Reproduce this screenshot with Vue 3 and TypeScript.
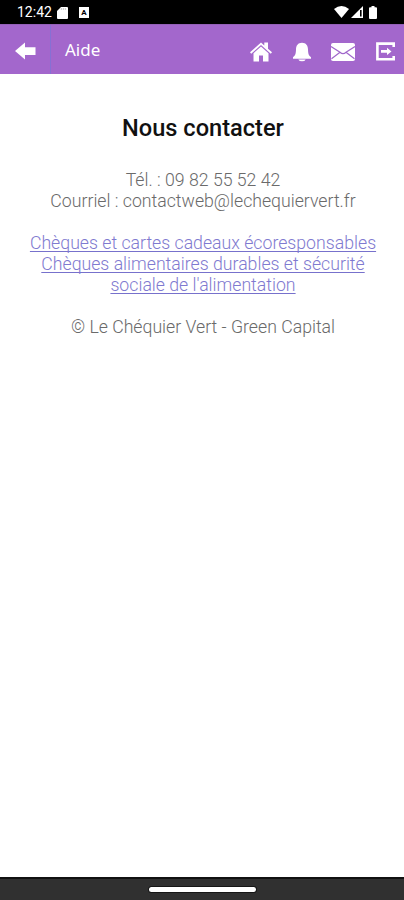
<script setup lang="ts">
interface HelpLink {
  id: string
  lines: string[]
}

const links: HelpLink[] = [
  { id: 'gift', lines: ['Chèques et cartes cadeaux écoresponsables'] },
  { id: 'food', lines: ['Chèques alimentaires durables et sécurité', "sociale de l'alimentation"] },
]
</script>

<template>
  <div class="screen">
    <div class="status">
      <span class="clock">12:42</span>
      <svg class="sd" width="11" height="12" viewBox="0 0 11 12"><path d="M4 0H10Q11 0 11 1V11Q11 12 10 12H1Q0 12 0 11V4Z" fill="#fff" /><path d="M4.3 1V3M6.3 1V3M8.3 1V3" stroke="#aaa" stroke-width=".7" /></svg>
      <span class="badge">A</span>
      <span class="grow"></span>
      <svg width="15" height="12" viewBox="0 0 15 12"><path d="M0 3Q7.5-3 15 3L7.5 12Z" fill="#fff" /></svg>
      <svg class="signal" width="12" height="12" viewBox="0 0 12 12"><path d="M12 0V12H0Z" fill="#fff" /><path d="M9.8 4V10.5" stroke="#000" stroke-width="1.6" /></svg>
      <svg class="battery" width="8" height="13" viewBox="0 0 8 13"><path d="M2.5 0H5.5V1.3H7Q8 1.3 8 2.3V12Q8 13 7 13H1Q0 13 0 12V2.3Q0 1.3 1 1.3H2.5Z" fill="#fff" /></svg>
    </div>

    <header class="bar">
      <button class="back" aria-label="Retour">
        <svg width="21" height="18" viewBox="0 0 21 18"><path d="M0 9L10 0.5V5.2H20.5V13H10V17.5Z" fill="#fff" /></svg>
      </button>
      <h1 class="title">Aide</h1>
      <nav class="actions">
        <svg width="22" height="20" viewBox="0 0 22 20"><path d="M0 10.3L11 0.5L14.3 3.4V.5H18V6.7L22 10.3L20.8 11.7L11 3.1L1.2 11.7Z" fill="#fff" /><path d="M3.5 11.2L11 4.6L18.5 11.2V19.5H13V13.5H9V19.5H3.5Z" fill="#fff" /></svg>
        <svg width="18" height="20" viewBox="0 0 18 20"><path d="M9 .8C13 .8 14.9 3.6 15 7.5C15.1 12 15.8 13.5 18 15.2V16.8H0V15.2C2.2 13.5 2.9 12 3 7.5C3.1 3.6 5 .8 9 .8Z" fill="#fff" /><path d="M5.3 17.4H12.7Q11.8 19.3 9 19.3T5.3 17.4Z" fill="#fff" /></svg>
        <svg width="24" height="18" viewBox="0 0 24 18"><rect width="24" height="18" rx="2" fill="#fff" /><path d="M0 3.5L9 9.2Q12 12 15 9.2L24 3.5M.5 15.7L8.7 9.4M23.5 15.7L15.3 9.4" fill="none" stroke="#a067cb" stroke-width="1.2" /></svg>
        <svg width="19" height="19" viewBox="0 0 19 19"><path d="M17.7 5V1.6H1.4V17.2H17.7V14" fill="none" stroke="#fff" stroke-width="2.6" /><path d="M5 8H11V5.8L15.5 9.4L11 13V10.8H5Z" fill="#fff" /></svg>
      </nav>
    </header>

    <main class="content">
      <h2>Nous contacter</h2>
      <p class="info"><span class="phone">Tél. : 09 82 55 52 42</span><br /><span class="mail">Courriel : contactweb@lechequiervert.fr</span></p>
      <p class="links">
        <a v-for="link in links" :key="link.id" :class="link.id">
          <span v-for="line in link.lines" :key="line" class="line">{{ line }}</span>
        </a>
      </p>
      <p class="copyright">© Le Chéquier Vert - Green Capital</p>
    </main>

    <footer class="gesture"><span></span></footer>
  </div>
</template>

<style>
body { background: #fff; }
</style>

<style scoped>
.screen { height: 900px; display: flex; flex-direction: column; font-family: Roboto, sans-serif; background: #fff; overflow: hidden; }
.status { height: 24px; flex: none; box-sizing: border-box; padding: 0 27px 0 17px; display: flex; align-items: center; background: #000; color: #fff; }
.clock { width: 40px; font-size: 14px; line-height: 24px; font-weight: 400; }
.sd { margin-top: 1px; }
.badge { width: 10px; height: 11px; margin: 1px 0 0 11px; background: #fff; color: #000; font-size: 8px; line-height: 11px; font-weight: 700; text-align: center; }
.grow { flex: 1; }
.signal { margin-left: 2px; }
.battery { margin-left: 6px; }
.bar { height: 50px; flex: none; box-sizing: border-box; display: flex; align-items: center; background: #a367cc; border-top: 1px solid #9460b8; }
.back { width: 51px; height: 49px; padding: 2px 0 0 15px; border: 0; border-right: 1px solid #8670d4; box-sizing: border-box; background: none; display: flex; align-items: center; }
.title { margin: 1px 0 0 14px; font: 400 17px/24px 'Noto Sans', sans-serif; color: #fff; }
.actions { margin: 4px 9px 0 auto; display: flex; align-items: center; gap: 20.7px; }
.actions svg, .back svg, .status svg { flex: none; }
.content { flex: 1; padding: 39px 0 0 2px; text-align: center; color: #6a6a6a; }
h2 { margin: 0; font-size: 23.6px; line-height: 30px; font-weight: 500; color: #111; }
p { margin: 0; font-size: 17.7px; line-height: 21px; font-weight: 300; white-space: nowrap; }
.info { margin-top: 27px; }
.links { margin-top: 21px; }
.links a { display: block; color: #7f7ad0; }
.line { display: block; text-decoration: underline #7771cc; text-decoration-thickness: 1px; text-underline-offset: 2px; text-decoration-skip-ink: none; }
.copyright { margin-top: 21px; }
.gesture { height: 23px; flex: none; display: flex; align-items: center; justify-content: center; box-sizing: border-box; border-top: 2px solid #111; background: #303030; }
.gesture span { width: 107px; height: 5px; margin: -1px 0 0 1px; border-radius: 3px; background: #fff; box-shadow: 0 0 0 1px #161616; }
</style>
